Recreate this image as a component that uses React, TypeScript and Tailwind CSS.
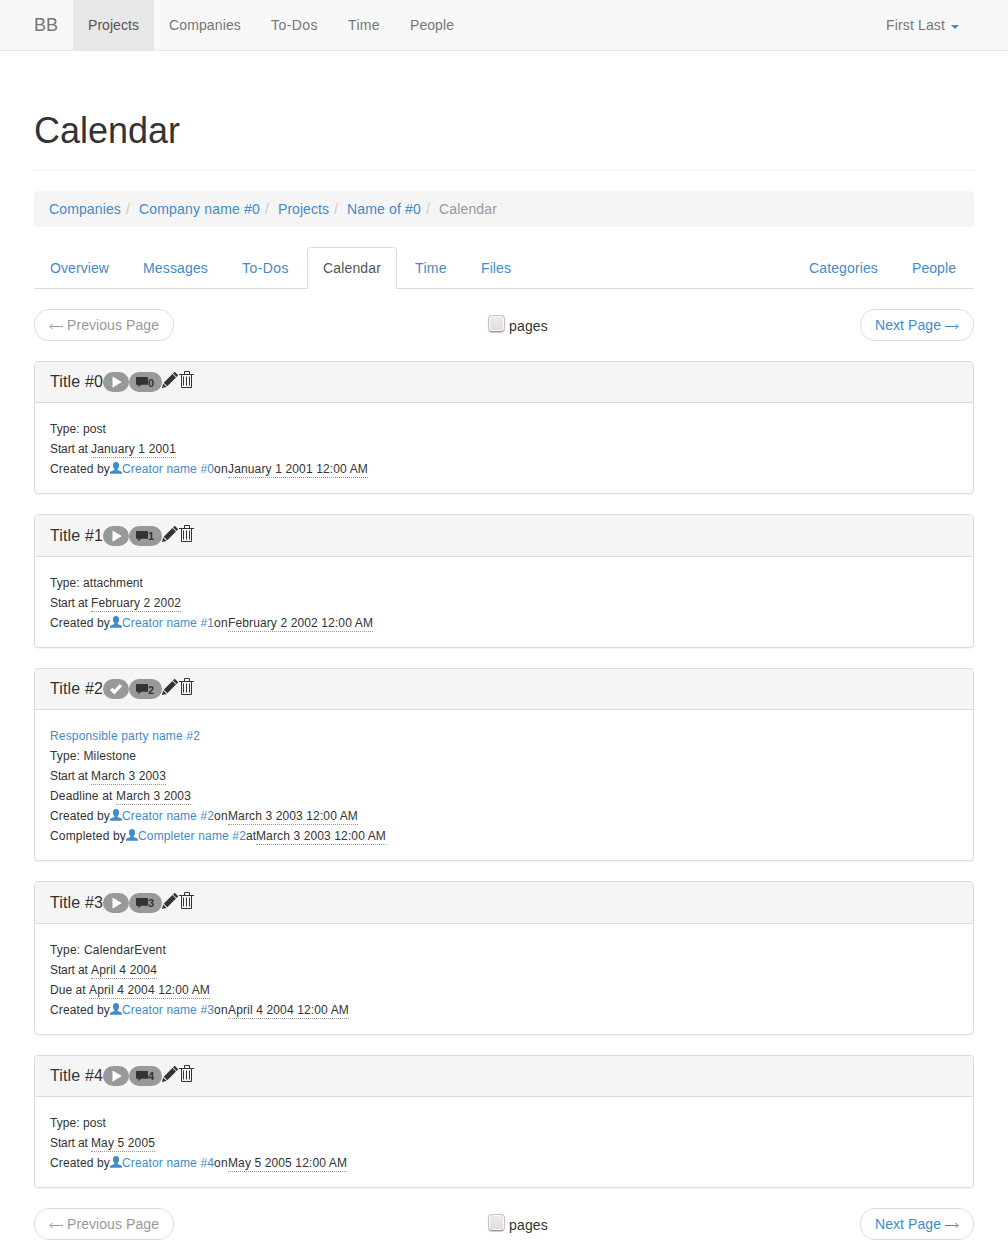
import React from "react";

type Line = { text?: string; tw?: string; link?: string; lw?: string; date?: string; dw?: string; person?: string; pw?: string; join?: string; };
type Entry = { title: string; done?: boolean; lines: Line[] };

const entries: Entry[] = [
  {
    title: "0",
    lines: [
      { text: "Type: post", tw: "w-[56px]" },
      { text: "Start at", tw: "w-[41px]", date: "January 1 2001", dw: "w-[85px]" },
      { text: "Created by", tw: "w-[60px]", person: "Creator name #0", pw: "w-[92px]", join: "on", date: "January 1 2001 12:00 AM", dw: "w-[140px]" },
    ],
  },
  {
    title: "1",
    lines: [
      { text: "Type: attachment", tw: "w-[93px]" },
      { text: "Start at", tw: "w-[41px]", date: "February 2 2002", dw: "w-[90px]" },
      { text: "Created by", tw: "w-[60px]", person: "Creator name #1", pw: "w-[92px]", join: "on", date: "February 2 2002 12:00 AM", dw: "w-[145px]" },
    ],
  },
  {
    title: "2",
    done: true,
    lines: [
      { link: "Responsible party name #2", lw: "w-[150px]" },
      { text: "Type: Milestone", tw: "w-[86px]" },
      { text: "Start at", tw: "w-[41px]", date: "March 3 2003", dw: "w-[75px]" },
      { text: "Deadline at", tw: "w-[66px]", date: "March 3 2003", dw: "w-[75px]" },
      { text: "Created by", tw: "w-[60px]", person: "Creator name #2", pw: "w-[92px]", join: "on", date: "March 3 2003 12:00 AM", dw: "w-[130px]" },
      { text: "Completed by", tw: "w-[76px]", person: "Completer name #2", pw: "w-[108px]", join: "at", date: "March 3 2003 12:00 AM", dw: "w-[130px]" },
    ],
  },
  {
    title: "3",
    lines: [
      { text: "Type: CalendarEvent", tw: "w-[116px]" },
      { text: "Start at", tw: "w-[41px]", date: "April 4 2004", dw: "w-[66px]" },
      { text: "Due at", tw: "w-[39px]", date: "April 4 2004 12:00 AM", dw: "w-[121px]" },
      { text: "Created by", tw: "w-[60px]", person: "Creator name #3", pw: "w-[92px]", join: "on", date: "April 4 2004 12:00 AM", dw: "w-[121px]" },
    ],
  },
  {
    title: "4",
    lines: [
      { text: "Type: post", tw: "w-[56px]" },
      { text: "Start at", tw: "w-[41px]", date: "May 5 2005", dw: "w-[64px]" },
      { text: "Created by", tw: "w-[60px]", person: "Creator name #4", pw: "w-[92px]", join: "on", date: "May 5 2005 12:00 AM", dw: "w-[119px]" },
    ],
  },
];

/* Spreads a single run of text evenly over the width of its box. */
function Fit({ children, className = "" }: { children: string; className?: string }) {
  const outer = React.useRef<HTMLSpanElement>(null);
  const inner = React.useRef<HTMLSpanElement>(null);
  const [gap, setGap] = React.useState(0);
  React.useLayoutEffect(() => {
    if (!outer.current || !inner.current) return;
    const room = outer.current.getBoundingClientRect().width - inner.current.getBoundingClientRect().width;
    setGap((g) => g + room / children.length);
  }, [children]);
  return (
    <span ref={outer} className={"inline-block shrink-0 whitespace-nowrap " + className}>
      <span ref={inner} style={{ letterSpacing: gap }}>{children}</span>
    </span>
  );
}

const Play = () => (
  <svg className="ml-[1px] h-3 w-3" viewBox="0 0 12 12" fill="#fff"><path d="M1.500.9v10.400q0 .4.400.2L10.300 6.300q.4-.3 0-.6L1.900.7Q1.500.5 1.500.9z" /></svg>
);
const Check = () => (
  <svg className="h-3 w-3" viewBox="0 0 12 12" fill="#fff"><path d="M0 7 2.300 4.700l2.100 2.100L9.800 1 12 3.200l-7.600 8.200z" /></svg>
);
const Comment = () => (
  <svg className="h-3 w-3" viewBox="0 0 12 12" fill="#333"><path d="M.5 1h11q.5 0 .5.5v6.800q0 .5-.5.500H5.200L2.300 11.300V8.800H.5Q0 8.800 0 8.300V1.500Q0 1 .5 1z" /></svg>
);
const Pencil = () => (
  <svg className="h-4 w-4" viewBox="0 0 16 16" fill="#333"><path d="m0 16 1.100-4.600 3.500 3.500zM1.700 10.700l8.700-8.700 3.600 3.600-8.700 8.700zM11 1.400 12.200.2q.5-.5 1 0l2.600 2.600q.5.500 0 1L14.600 5z" /></svg>
);
const Trash = () => (
  <svg className="-mt-[1px] h-[17px] w-4" viewBox="0 0 16 17" fill="none" stroke="#333"><path d="M1 3.500h15M6.500 3V.5h5V3M3.500 4v12.500h10V4M5.500 5.500v9M8.500 5.500v9M11.500 5.500v9" /></svg>
);
const Person = () => (
  <svg className="h-3 w-3 shrink-0" viewBox="0 0 12 12" fill="#428bca"><path d="M6 0c2 0 3.100 1.300 3.100 3.200 0 1.800-.7 3.100-1.500 3.900v.8l3.700 1.700q.7.400.7 1.200v.9H0v-.9q0-.8.700-1.200l3.700-1.700v-.8C3.600 6.300 2.900 5 2.900 3.200 2.900 1.300 4 0 6 0z" /></svg>
);

function Arrow({ right = false }: { right?: boolean }) {
  return (
    <svg className={right ? "h-[14px] w-[14px] shrink-0 -scale-x-100" : "h-[14px] w-[14px] shrink-0"} viewBox="0 0 14 14" fill="none" stroke="currentColor" strokeWidth="1">
      <path d="M1 8.500h13M3.500 6 1 8.500 3.500 11" />
    </svg>
  );
}

function Pager() {
  return (
    <div className="flex h-8 items-start justify-between">
      <a className="flex h-8 w-[140px] items-center rounded-[15px] border border-[#ddd] px-[14px] text-[#999]">
        <Arrow /><Fit className="ml-[4px] w-[92px]">Previous Page</Fit>
      </a>
      <label className="ml-[2px] flex h-8 text-[#333]">
        <span className="mt-[6px] h-[17px] w-[17px] rounded border border-[#c4c4c4] border-b-[#999] bg-linear-to-b from-[#edecea] to-[#dfddda] shadow-[inset_0_0_0_1px_#f8f8f7,0_1px_1px_#ccc]" />
        <Fit className="mt-[7px] ml-[4px] w-[39px] leading-5">pages</Fit>
      </label>
      <a className="flex h-8 w-[114px] items-center rounded-[15px] border border-[#ddd] px-[14px] text-[#428bca]">
        <Fit className="mr-[4px] w-[66px]">Next Page</Fit><Arrow right />
      </a>
    </div>
  );
}

function Panel({ entry }: { entry: Entry }) {
  return (
    <section className="mb-5 rounded border border-[#ddd] bg-white shadow-[0_1px_1px_rgba(0,0,0,0.05)]">
      <div className="flex h-[41.4px] items-start rounded-t-[3px] border-b border-[#ddd] bg-[#f5f5f5] pt-[10.35px] pl-[15px]">
        <Fit className="w-[53px] text-[16px] leading-5">{"Title #" + entry.title}</Fit>
        <span className="flex h-5 w-[26px] items-center justify-center rounded-[10px] bg-[#999]">{entry.done ? <Check /> : <Play />}</span>
        <span className="flex h-5 w-[33px] items-center rounded-[10px] bg-[#999] pl-[7px] text-[11px] leading-3 font-bold">
          <Comment /><span className="mt-[1px]">{entry.title}</span>
        </span>
        <Pencil />
        <Trash />
      </div>
      <div className="px-[15px] pt-4 pb-[14px] text-[12px] leading-5">
        {entry.lines.map((l, i) => (
          <div key={i} className="flex h-5 items-start">
            {l.text && <Fit className={l.tw}>{l.text + (l.date && !l.person ? "\u00a0" : "")}</Fit>}
            {l.link && <Fit className={"text-[#428bca] " + l.lw}>{l.link}</Fit>}
            {l.person && <span className="mt-[3px]"><Person /></span>}
            {l.person && <Fit className={"text-[#428bca] " + l.pw}>{l.person}</Fit>}
            {l.join && <Fit className={l.join === "on" ? "w-[14px]" : "w-[10px]"}>{l.join}</Fit>}
            {l.date && <Fit className={"h-[19px] border-b border-dotted border-[#999] " + l.dw}>{l.date}</Fit>}
          </div>
        ))}
      </div>
    </section>
  );
}

const nav = [
  ["Projects", "w-[51px]"], ["Companies", "w-[72px]"], ["To-Dos", "w-[47px]"], ["Time", "w-[32px]"], ["People", "w-[44px]"],
];
const crumbs = [
  ["Companies", "w-[72px]"], ["Company name #0", "w-[121px]"], ["Projects", "w-[51px]"], ["Name of #0", "w-[74px]"],
];
const tabs = [
  ["Overview", "w-[59px]"], ["Messages", "w-[65px]"], ["To-Dos", "w-[47px]"], ["Calendar", "w-[58px]"], ["Time", "w-[32px]"], ["Files", "w-[30px]"],
];

export default function App() {
  return (
    <div className="min-h-[1260px] overflow-hidden bg-white font-['Liberation_Sans',Arial,sans-serif] text-[14px] leading-5 text-[#333]">
      <nav className="flex h-[51px] border-b border-[#e7e7e7] bg-[#f8f8f8] px-[34px] text-[#777]">
        <Fit className="mr-[15px] w-[24px] pt-[15px] text-[18px]">BB</Fit>
        {nav.map(([t, w], i) => (
          <a key={t} className={"h-[50px] px-[15px] pt-[15px] " + (i === 0 ? "bg-[#e7e7e7] text-[#555]" : "")}><Fit className={w}>{t}</Fit></a>
        ))}
        <a className="mr-[15px] ml-auto flex pt-[15px]">
          <Fit className="w-[59px]">First Last</Fit>
          <svg className="mt-[10px] ml-[6px] h-1 w-2" viewBox="0 0 8 4" fill="#428bca"><path d="M0 0h8L4 4z" /></svg>
        </a>
      </nav>
      <main className="px-[34px]">
        <header className="mt-[60px] mb-5 h-[60px] border-b border-[#eee]">
          <h1 className="text-[36px] leading-10"><Fit className="w-[146px]">Calendar</Fit></h1>
        </header>
        <ol className="mb-5 flex h-9 rounded bg-[#f5f5f5] px-[15px] py-2">
          {crumbs.map(([t, w]) => (
            <li key={t} className="flex"><Fit className={"text-[#428bca] " + w}>{t}</Fit><span className="w-[18px] pl-[5px] text-[#ccc]">/</span></li>
          ))}
          <li><Fit className="w-[58px] text-[#999]">Calendar</Fit></li>
        </ol>
        <div className="mb-5 flex h-[42px] border-b border-[#ddd] text-[#428bca]">
          {tabs.map(([t, w], i) => (
            <a key={t} className={"mr-[2px] h-[42px] rounded-t border border-b-0 px-[15px] pt-[10px] " + (i === 3 ? "border-[#ddd] bg-white text-[#555]" : "border-transparent")}><Fit className={w}>{t}</Fit></a>
          ))}
          <a className="ml-auto pt-[11px] pr-[34px]"><Fit className="w-[69px]">Categories</Fit></a>
          <a className="pt-[11px] pr-[18px]"><Fit className="w-[44px]">People</Fit></a>
        </div>
        <Pager />
        <div className="pt-5">{entries.map((e) => <Panel key={e.title} entry={e} />)}</div>
        <Pager />
      </main>
    </div>
  );
}
